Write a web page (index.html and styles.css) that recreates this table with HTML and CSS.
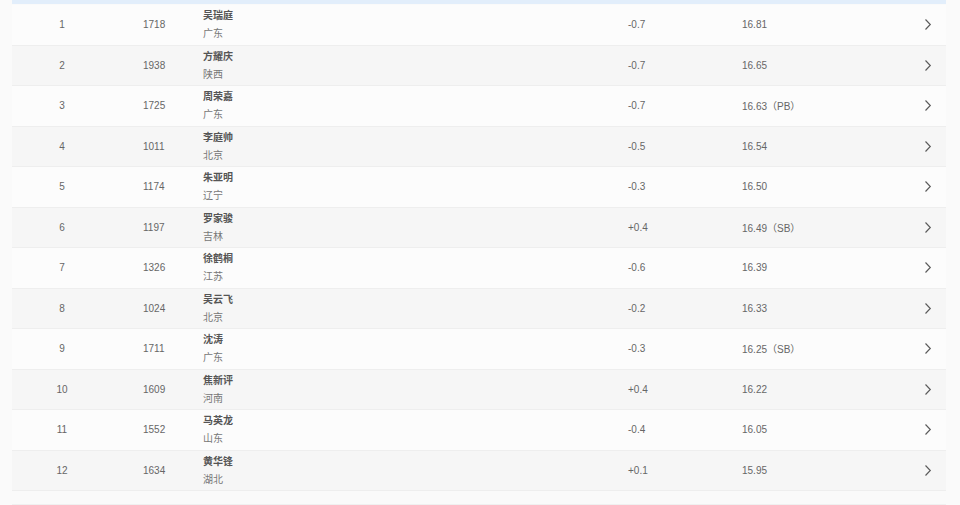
FILE: index.html
```html
<!DOCTYPE html>
<html lang="zh">
<head>
<meta charset="utf-8">
<link rel="stylesheet" href="styles.css">
</head>
<body>
<div class="table">
  <div class="head"></div>
  <div class="row"><div class="rank">1</div><div class="score">1718</div><div class="name"><b>吴瑞庭</b><span>广东</span></div><div class="wind">-0.7</div><div class="res">16.81</div><div class="go"><svg width="8" height="13" viewBox="0 0 8 13"><path d="M1.5 1.5 L6.3 6.5 L1.5 11.5" fill="none" stroke="#5a5a5a" stroke-width="1.15"/></svg></div></div>
  <div class="row alt"><div class="rank">2</div><div class="score">1938</div><div class="name"><b>方耀庆</b><span>陕西</span></div><div class="wind">-0.7</div><div class="res">16.65</div><div class="go"><svg width="8" height="13" viewBox="0 0 8 13"><path d="M1.5 1.5 L6.3 6.5 L1.5 11.5" fill="none" stroke="#5a5a5a" stroke-width="1.15"/></svg></div></div>
  <div class="row"><div class="rank">3</div><div class="score">1725</div><div class="name"><b>周荣嘉</b><span>广东</span></div><div class="wind">-0.7</div><div class="res">16.63（PB）</div><div class="go"><svg width="8" height="13" viewBox="0 0 8 13"><path d="M1.5 1.5 L6.3 6.5 L1.5 11.5" fill="none" stroke="#5a5a5a" stroke-width="1.15"/></svg></div></div>
  <div class="row alt"><div class="rank">4</div><div class="score">1011</div><div class="name"><b>李庭帅</b><span>北京</span></div><div class="wind">-0.5</div><div class="res">16.54</div><div class="go"><svg width="8" height="13" viewBox="0 0 8 13"><path d="M1.5 1.5 L6.3 6.5 L1.5 11.5" fill="none" stroke="#5a5a5a" stroke-width="1.15"/></svg></div></div>
  <div class="row"><div class="rank">5</div><div class="score">1174</div><div class="name"><b>朱亚明</b><span>辽宁</span></div><div class="wind">-0.3</div><div class="res">16.50</div><div class="go"><svg width="8" height="13" viewBox="0 0 8 13"><path d="M1.5 1.5 L6.3 6.5 L1.5 11.5" fill="none" stroke="#5a5a5a" stroke-width="1.15"/></svg></div></div>
  <div class="row alt"><div class="rank">6</div><div class="score">1197</div><div class="name"><b>罗家骏</b><span>吉林</span></div><div class="wind">+0.4</div><div class="res">16.49（SB）</div><div class="go"><svg width="8" height="13" viewBox="0 0 8 13"><path d="M1.5 1.5 L6.3 6.5 L1.5 11.5" fill="none" stroke="#5a5a5a" stroke-width="1.15"/></svg></div></div>
  <div class="row"><div class="rank">7</div><div class="score">1326</div><div class="name"><b>徐鹤桐</b><span>江苏</span></div><div class="wind">-0.6</div><div class="res">16.39</div><div class="go"><svg width="8" height="13" viewBox="0 0 8 13"><path d="M1.5 1.5 L6.3 6.5 L1.5 11.5" fill="none" stroke="#5a5a5a" stroke-width="1.15"/></svg></div></div>
  <div class="row alt"><div class="rank">8</div><div class="score">1024</div><div class="name"><b>吴云飞</b><span>北京</span></div><div class="wind">-0.2</div><div class="res">16.33</div><div class="go"><svg width="8" height="13" viewBox="0 0 8 13"><path d="M1.5 1.5 L6.3 6.5 L1.5 11.5" fill="none" stroke="#5a5a5a" stroke-width="1.15"/></svg></div></div>
  <div class="row"><div class="rank">9</div><div class="score">1711</div><div class="name"><b>沈涛</b><span>广东</span></div><div class="wind">-0.3</div><div class="res">16.25（SB）</div><div class="go"><svg width="8" height="13" viewBox="0 0 8 13"><path d="M1.5 1.5 L6.3 6.5 L1.5 11.5" fill="none" stroke="#5a5a5a" stroke-width="1.15"/></svg></div></div>
  <div class="row alt"><div class="rank">10</div><div class="score">1609</div><div class="name"><b>焦新评</b><span>河南</span></div><div class="wind">+0.4</div><div class="res">16.22</div><div class="go"><svg width="8" height="13" viewBox="0 0 8 13"><path d="M1.5 1.5 L6.3 6.5 L1.5 11.5" fill="none" stroke="#5a5a5a" stroke-width="1.15"/></svg></div></div>
  <div class="row"><div class="rank">11</div><div class="score">1552</div><div class="name"><b>马英龙</b><span>山东</span></div><div class="wind">-0.4</div><div class="res">16.05</div><div class="go"><svg width="8" height="13" viewBox="0 0 8 13"><path d="M1.5 1.5 L6.3 6.5 L1.5 11.5" fill="none" stroke="#5a5a5a" stroke-width="1.15"/></svg></div></div>
  <div class="row alt"><div class="rank">12</div><div class="score">1634</div><div class="name"><b>黄华锋</b><span>湖北</span></div><div class="wind">+0.1</div><div class="res">15.95</div><div class="go"><svg width="8" height="13" viewBox="0 0 8 13"><path d="M1.5 1.5 L6.3 6.5 L1.5 11.5" fill="none" stroke="#5a5a5a" stroke-width="1.15"/></svg></div></div>
  <div class="foot"></div>
</div>
</body>
</html>
```
FILE: styles.css
```css
html, body {
  margin: 0;
  padding: 0;
  background: #fafafa;
}
body {
  font-family: "Liberation Sans", Arial, "Noto Sans CJK SC", sans-serif;
  font-size: 10px;
  color: #666;
}
.table {
  margin-left: 12px;
  width: 934px;
}
.head {
  height: 4px;
  background: #e2eefb;
  margin-bottom: 1px;
}
.row {
  display: grid;
  grid-template-columns: 100px 91px 425px 114px 1fr 36px;
  align-items: center;
  height: 40.5px;
  box-sizing: border-box;
  border-bottom: 1px solid #eeeeee;
  background: #fcfcfc;
}
.row.alt {
  background: #f6f6f6;
}
.rank {
  text-align: center;
}
.score {
  padding-left: 31px;
}
.name {
  display: flex;
  flex-direction: column;
  line-height: 18px;
  font-size: 10px;
  padding-top: 1px;
}
.name b {
  font-weight: bold;
  color: #555;
}
.name span {
  color: #777;
}
.go {
  display: flex;
  justify-content: center;
  align-items: center;
}
.go svg {
  display: block;
}
.foot {
  margin-top: 13px;
  border-top: 1px solid #f0f0f0;
  height: 20px;
}
```
